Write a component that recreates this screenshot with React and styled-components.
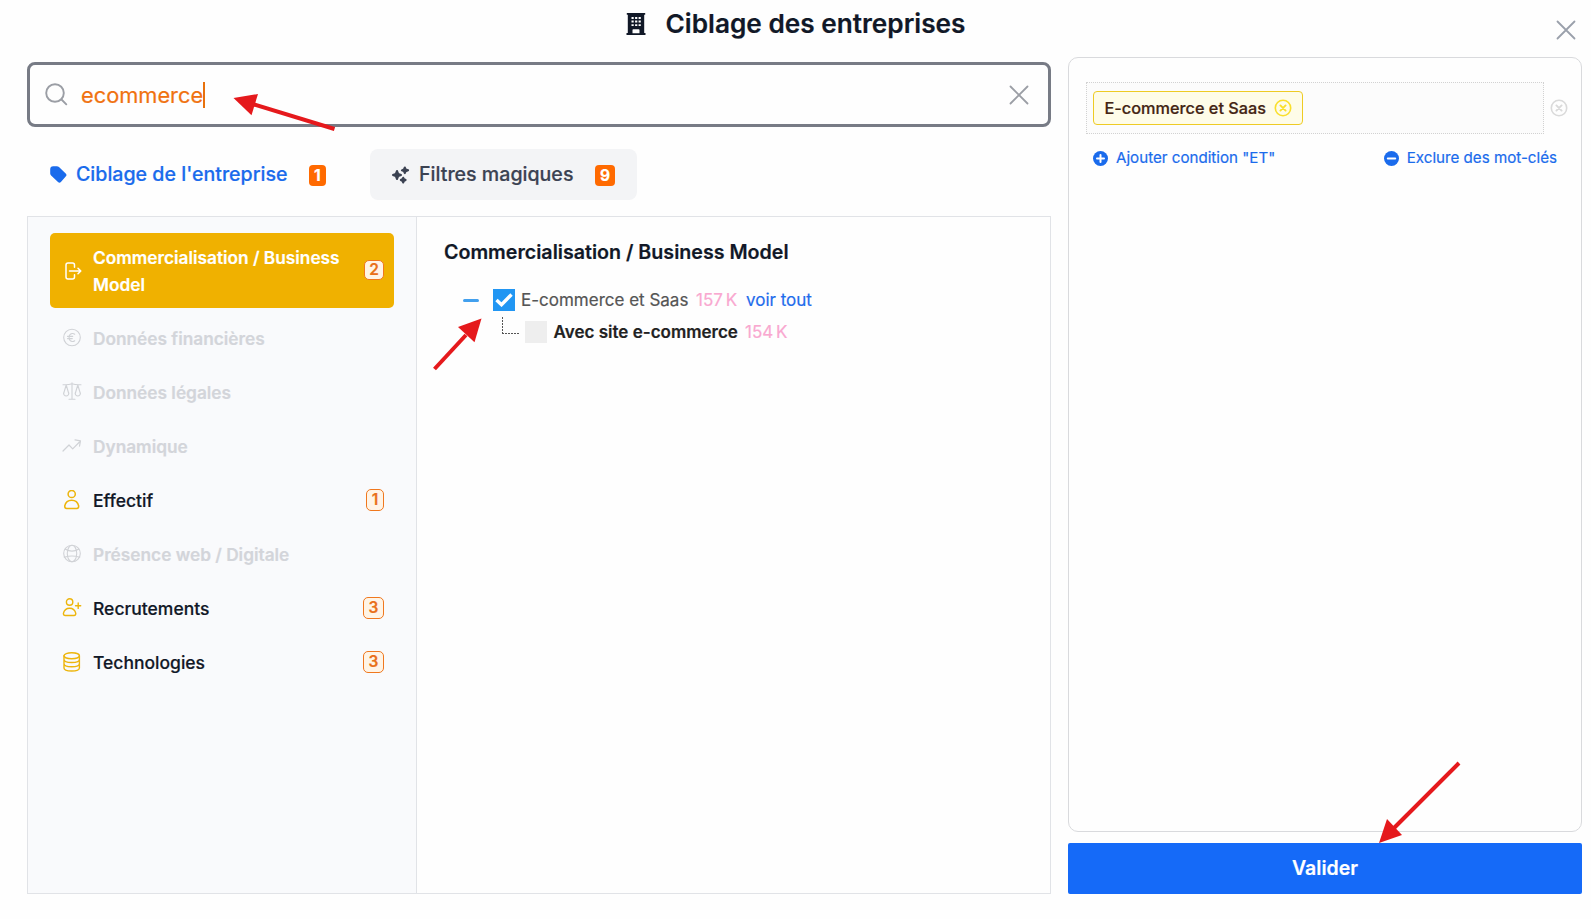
import React from "react";
import styled, { createGlobalStyle } from "styled-components";

const GlobalStyle = createGlobalStyle`
  *, *::before, *::after { box-sizing: border-box; }
  body { margin: 0; background: #fefefe; font-family: Inter, "Liberation Sans", sans-serif; color: #111827; -webkit-text-stroke: 0.2px; }
  svg { display: block; flex: none; }
  button { font: inherit; border: 0; padding: 0; background: none; color: inherit; }
`;

const Dialog = styled.div`
  position: relative;
  width: 1591px;
  height: 919px;
  display: flex;
  flex-direction: column;
  overflow: hidden;
`;

const Header = styled.header`
  height: 57px;
  flex: none;
  display: grid;
  grid-template-columns: 1fr auto 1fr;
  padding: 8px 15px 0;
`;

const Heading = styled.h1`
  grid-column: 2;
  margin: 0;
  display: flex;
  gap: 20px;
  height: 32px;
  align-items: center;
  font-size: 26.2px;
  font-weight: 600;
  line-height: 32px;
  white-space: nowrap;
`;

const CloseButton = styled.button`
  justify-self: end;
  align-self: start;
  margin-top: 12px;
  color: #9aa0ab;
`;

const Columns = styled.div`
  display: flex;
  gap: 17px;
  height: 837px;
  padding: 0 9px 0 27px;
`;

const Main = styled.main`
  width: 1024px;
  flex: none;
  display: flex;
  flex-direction: column;
  padding-top: 5px;
`;

const SearchBox = styled.div`
  height: 65px;
  flex: none;
  display: flex;
  align-items: center;
  padding: 0 19px 0 15px;
  border: 3px solid #777b85;
  border-radius: 8px;
  color: #9b9ea5;
`;

const Query = styled.span`
  flex: 1;
  display: flex;
  align-items: center;
  margin-left: 13px;
  color: #f07210;
  font-size: 21.8px;
  line-height: 30px;
`;

const Caret = styled.i`
  width: 2px;
  height: 26px;
  background: #e8710c;
`;

const Tabs = styled.nav`
  display: flex;
  gap: 22px;
  margin-top: 22px;
  height: 51px;
  flex: none;
`;

const Tab = styled.button`
  display: flex;
  align-items: center;
  width: ${(p) => p.$width};
  padding-left: ${(p) => (p.$filled ? "21px" : "23px")};
  border-radius: 8px;
  background: ${(p) => (p.$filled ? "#f3f4f6" : "transparent")};
  color: ${(p) => (p.$filled ? "#3b4252" : "#1a6bec")};
  font-size: 19.6px;
  font-weight: 500;
  line-height: 28px;
  white-space: nowrap;
`;

const TabLabel = styled.span`
  margin: 0 21.5px 2px 9px;
`;

const TabCount = styled.span`
  height: 21px;
  padding: 0 5px;
  margin-top: 2px;
  border-radius: 4px;
  background: #ff6a00;
  color: #fff;
  font-size: 15.5px;
  font-weight: 700;
  line-height: 21px;
`;

const Panel = styled.section`
  margin-top: 16px;
  flex: 1;
  display: flex;
  border: 1px solid #e1e3e7;
`;

const Sidebar = styled.aside`
  width: 389px;
  padding: 16px 22px;
  border-right: 1px solid #e1e3e7;
  background: #f9fafc;
`;

const Category = styled.div`
  display: flex;
  align-items: center;
  min-height: ${(p) => (p.$active ? "75px" : "54px")};
  margin-bottom: ${(p) => (p.$active ? "3px" : "0")};
  padding: 0 10px 0 12px;
  border-radius: 5px;
  background: ${(p) => (p.$active ? "#f0b100" : "transparent")};
  color: ${(p) => (p.$active ? "#fff" : p.$disabled ? "#d3d5da" : "#111827")};
  font-size: ${(p) => (p.$active || p.$disabled ? "17.27px" : "17.5px")};
  font-weight: ${(p) => (p.$active || p.$disabled ? 600 : 500)};
  line-height: 27px;
  > svg { color: ${(p) => (p.$active ? "#fff" : p.$disabled ? "#d0d2d6" : "#edb50c")}; }
`;

const CategoryName = styled.span`
  width: 262px;
  margin-left: 11px;
`;

const Count = styled.span`
  margin-left: auto;
  margin-bottom: ${(p) => (p.$active ? "1px" : "0")};
  height: ${(p) => (p.$active ? "20px" : "22px")};
  padding: 0 ${(p) => (p.$active ? "4px" : "4.6px")};
  border: 1.5px solid #f0781e;
  border-radius: 5px;
  background: #fff4e6;
  color: #e9701a;
  font-size: 15.5px;
  font-weight: 600;
  line-height: ${(p) => (p.$active ? "18px" : "20px")};
`;

const Results = styled.div`
  flex: 1;
  padding: 20px 0 0 27px;
`;

const ResultsTitle = styled.h2`
  margin: 0 0 17px;
  font-size: 19.65px;
  line-height: 30px;
  font-weight: 600;
`;

const TreeRow = styled.div`
  display: flex;
  align-items: center;
  height: 32px;
  padding-left: ${(p) => (p.$child ? "58px" : "19px")};
  font-size: 17px;
  white-space: nowrap;
`;

const Collapse = styled.i`
  width: 16px;
  height: 3px;
  border-radius: 1.5px;
  background: #42a0ee;
  margin-right: 14px;
`;

const Branch = styled.i`
  width: 18px;
  height: 17px;
  margin: 0 5px 13px 0;
  background:
    repeating-linear-gradient(180deg, #555 0 2px, transparent 2px 3px) left / 1px 100% no-repeat,
    repeating-linear-gradient(90deg, #555 0 2px, transparent 2px 3px) bottom / 100% 1px no-repeat;
`;

const Checkbox = styled.span`
  width: 22px;
  height: 22px;
  display: grid;
  place-items: center;
  background: ${(p) => (p.$checked ? "#2196f3" : "#eee")};
`;

const ResultName = styled.span`
  margin-left: ${(p) => (p.$strong ? "6.6px" : "6px")};
  width: ${(p) => (p.$strong ? "191.4px" : "175px")};
  color: ${(p) => (p.$strong ? "#222" : "#555")};
  font-weight: ${(p) => (p.$strong ? 600 : 400)};
`;

const Volume = styled.span`
  width: 50px;
  color: #f9a8d0;
  word-spacing: -2px;
`;

const SeeAll = styled.a`
  color: #1f6cec;
`;

const Side = styled.aside`
  flex: 1;
  min-width: 0;
  display: flex;
  flex-direction: column;
  gap: 11px;
`;

const Conditions = styled.section`
  flex: 1;
  padding: 24px 12px 0 17px;
  border: 1px solid #d9dadd;
  border-radius: 10px;
`;

const Group = styled.div`
  display: flex;
  align-items: center;
  gap: 6px;
`;

const DropArea = styled.div`
  width: 458px;
  flex: none;
  height: 52px;
  display: flex;
  align-items: center;
  padding-left: 6px;
  border: 1px dotted #d2d2d2;
  background: #fcfcfc;
`;

const Chip = styled.span`
  width: 210px;
  height: 34px;
  display: flex;
  align-items: center;
  justify-content: space-between;
  padding: 0 10px 0 10.5px;
  border: 1px solid #eecb24;
  border-radius: 4px;
  background: #fefce8;
  color: #432413;
  font-size: 16.3px;
  font-weight: 500;
  white-space: nowrap;
  svg { color: #fadf2c; }
`;

const Actions = styled.div`
  display: flex;
  justify-content: space-between;
  padding: 14px 12px 0 7px;
`;

const Action = styled.button`
  display: flex;
  align-items: center;
  gap: 8px;
  color: #1a6bec;
  font-size: 15.15px;
  line-height: 20px;
  white-space: nowrap;
`;

const Submit = styled.button`
  height: 51px;
  flex: none;
  padding-bottom: 2px;
  border-radius: 2px;
  background: #156af8;
  color: #fff;
  font-size: 19.5px;
  font-weight: 600;
`;

const Pointers = styled.svg`
  position: absolute;
  inset: 0;
  pointer-events: none;
`;

const Line = ({ size = 20, width = 1.3, children }) => (
  <svg width={size} height={size} viewBox="0 0 20 20" fill="none" stroke="currentColor" strokeWidth={width} strokeLinecap="round" strokeLinejoin="round">
    {children}
  </svg>
);

const CrossIcon = () => (
  <Line width={1.8}><path d="M1.500 1.500l17 17M18.500 1.500L1.500 18.500" /></Line>
);

const BuildingIcon = () => (
  <svg width="20" height="22" viewBox="0 0 20 22" fill="#111827">
    <path fillRule="evenodd" d="M.8 0h18.4v1.8h-1V20h1.3v2H.5v-2h1.3V1.8h-1zM5.5 4v2h2.2V4zm3.6 0v2h2.2V4zm3.5 0v2h2.2V4zM5.5 7.6v2h2.2v-2zm3.6 0v2h2.2v-2zm3.5 0v2h2.2v-2zM5.5 11.2v1.8h2.2v-1.8zm3.6 0v1.8h2.2v-1.8zm3.5 0v1.8h2.2v-1.8zM6.5 17v3.2h7V17q0-.8-.8-.8H7.3q-.8 0-.8.8z" />
  </svg>
);

const SearchIcon = () => (
  <svg width="23" height="23" viewBox="0 0 23 23" fill="none" stroke="currentColor" strokeWidth="1.9" strokeLinecap="round">
    <circle cx="10" cy="10" r="8.800" /><path d="M16.500 16.500l4.800 4.800" />
  </svg>
);

const TagIcon = () => (
  <svg width="17" height="17" viewBox="0 0 17 17" fill="currentColor">
    <path d="M3.200.300h3.600q1.200 0 2.200.8l6.700 6.300q1.400 1.400.2 2.900l-5 5.600q-1.400 1.400-2.900.1L1.100 9.600Q.2 8.800.2 7.600V3.300Q.2.300 3.200.300z" />
  </svg>
);

const SparklesIcon = () => (
  <svg width="19" height="18" viewBox="0 0 19 18" fill="currentColor" stroke="currentColor" strokeWidth="2" strokeLinejoin="round">
    <path d="M6 5l1.200 2.800L10 9l-2.800 1.200L6 13l-1.200-2.800L2 9l2.800-1.200z" />
    <path d="M13.800 1.500l.9 1.900 2.400.9-2.400.9-.9 2-.9-2-2-.9 2-.9z" />
    <path d="M12.200 11.700l.8 1.500 1.600.8-1.600.8-.8 1.700-.8-1.700-1.600-.8 1.600-.8z" />
  </svg>
);

const icons = {
  exit: <Line width={1.5}><path d="M12.500 6.300V4q0-2-2-2H6Q4 2 4 4v12q0 2 2 2h4.500q2 0 2-2v-2.300M7.500 10h11M16 7.200L18.800 10 16 12.800" /></Line>,
  euro: <Line width={1.1}><circle cx="10" cy="9.500" r="8.300" /><path d="M12.700 6.200q-1.300-1-2.700-.7-2.900.6-2.900 4t2.900 4q1.400.3 2.700-.7M5.500 8.400h5.200M5.500 10.600h4.800" /></Line>,
  scales: <Line width={1.1}><path d="M10 .8v16M7 17.200h6M1 2.700h2.500Q7 2.700 10 1.700q3 1 6.500 1H19M4.200 3L1.800 11M4.200 3l2.400 8M15.800 3l-2.400 8M15.800 3l2.400 8M1.500 11q.3 3 2.700 3t2.700-3M13.100 11q.3 3 2.700 3t2.700-3" /></Line>,
  trend: <Line width={1.2}><path d="M1 15l6-6 3.700 3.800L18 5.500M13 3.900l5.500 1-1 5.300" /></Line>,
  user: <Line width={1.5}><circle cx="9.700" cy="4" r="3.600" /><path d="M2.700 16Q4 10.200 9.700 10.200T16.700 16q0 2.500-2 2.500h-10q-2 0-2-2.500z" /></Line>,
  globe: <Line width={1.1}><circle cx="10" cy="9.500" r="8.300" /><ellipse cx="10" cy="9.500" rx="4.700" ry="8.300" /><path d="M3 5q7 4.200 14 0M2.200 13.200q7.800-2.500 15.600 0" /></Line>,
  userPlus: <Line width={1.4}><circle cx="7.600" cy="4" r="3.200" /><path d="M1.400 15.300Q2.600 10.200 7.600 10.200t6.200 5.100q0 2.200-1.800 2.200H3.200q-1.800 0-1.800-2.200zM16.200 5v5.400M13.500 7.700h5.200" /></Line>,
  database: <Line width={1.4}><ellipse cx="9.700" cy="3.800" rx="7.700" ry="3" /><path d="M2 3.800v12.200q0 3 7.700 3t7.700-3V3.800M2 7.500q0 3 7.700 3t7.700-3M2 11.700q0 3 7.700 3t7.700-3" /></Line>,
};

const CircleCross = ({ color }) => (
  <svg width="18" height="18" viewBox="0 0 18 18" fill="none" stroke={color || "currentColor"} strokeWidth="1.600" strokeLinecap="round">
    <circle cx="9" cy="9" r="7.700" /><path d="M6.400 6.400l5.200 5.200M11.600 6.400l-5.200 5.200" strokeWidth="1.900" />
  </svg>
);

const CircleSign = ({ plus }) => (
  <svg width="15" height="15" viewBox="0 0 15 15">
    <circle cx="7.500" cy="7.500" r="7.500" fill="currentColor" />
    <path d={plus ? "M4 7.500h7M7.500 4v7" : "M3.800 7.500h7.400"} stroke="#fff" strokeWidth="2" strokeLinecap="round" />
  </svg>
);

const categories = [
  { icon: "exit", name: "Commercialisation / Business Model", count: 2, active: true },
  { icon: "euro", name: "Données financières", disabled: true },
  { icon: "scales", name: "Données légales", disabled: true },
  { icon: "trend", name: "Dynamique", disabled: true },
  { icon: "user", name: "Effectif", count: 1 },
  { icon: "globe", name: "Présence web / Digitale", disabled: true },
  { icon: "userPlus", name: "Recrutements", count: 3 },
  { icon: "database", name: "Technologies", count: 3 },
];

export default function App() {
  return (
    <Dialog>
      <GlobalStyle />
      <Header>
        <Heading><BuildingIcon />Ciblage des entreprises</Heading>
        <CloseButton aria-label="Fermer"><CrossIcon /></CloseButton>
      </Header>
      <Columns>
        <Main>
          <SearchBox>
            <SearchIcon />
            <Query>ecommerce<Caret /></Query>
            <CrossIcon />
          </SearchBox>
          <Tabs>
            <Tab $width="321px"><TagIcon /><TabLabel>Ciblage de l'entreprise</TabLabel><TabCount>1</TabCount></Tab>
            <Tab $width="267px" $filled><SparklesIcon /><TabLabel>Filtres magiques</TabLabel><TabCount>9</TabCount></Tab>
          </Tabs>
          <Panel>
            <Sidebar>
              {categories.map((c) => (
                <Category key={c.name} $active={c.active} $disabled={c.disabled}>
                  {icons[c.icon]}
                  <CategoryName>{c.name}</CategoryName>
                  {c.count && <Count $active={c.active}>{c.count}</Count>}
                </Category>
              ))}
            </Sidebar>
            <Results>
              <ResultsTitle>Commercialisation / Business Model</ResultsTitle>
              <TreeRow>
                <Collapse />
                <Checkbox $checked>
                  <svg width="18" height="14" viewBox="0 0 18 14" fill="none" stroke="#fff" strokeWidth="3.400"><path d="M1.500 7l5 4.700L16.500 1.500" /></svg>
                </Checkbox>
                <ResultName>E-commerce et Saas</ResultName>
                <Volume>157 K</Volume>
                <SeeAll>voir tout</SeeAll>
              </TreeRow>
              <TreeRow $child>
                <Branch />
                <Checkbox />
                <ResultName $strong>Avec site e-commerce</ResultName>
                <Volume>154 K</Volume>
              </TreeRow>
            </Results>
          </Panel>
        </Main>
        <Side>
          <Conditions>
            <Group>
              <DropArea><Chip>E-commerce et Saas<CircleCross /></Chip></DropArea>
              <CircleCross color="#dadada" />
            </Group>
            <Actions>
              <Action><CircleSign plus />Ajouter condition "ET"</Action>
              <Action><CircleSign />Exclure des mot-clés</Action>
            </Actions>
          </Conditions>
          <Submit>Valider</Submit>
        </Side>
      </Columns>
      <Pointers width="1591" height="919" fill="#e5191c" stroke="#e5191c">
        <path d="M254 104.500L334.500 129" strokeWidth="4" /><path stroke="none" d="M233.500 98l24.500-4-6.500 21.300z" />
        <path d="M466 335L434.500 369" strokeWidth="4" /><path stroke="none" d="M481.500 318.500l-23.500 8.500 16.500 15.300z" />
        <path d="M1394 828L1459 763" strokeWidth="4" /><path stroke="none" d="M1379 843l8-24 15 16z" />
      </Pointers>
    </Dialog>
  );
}
